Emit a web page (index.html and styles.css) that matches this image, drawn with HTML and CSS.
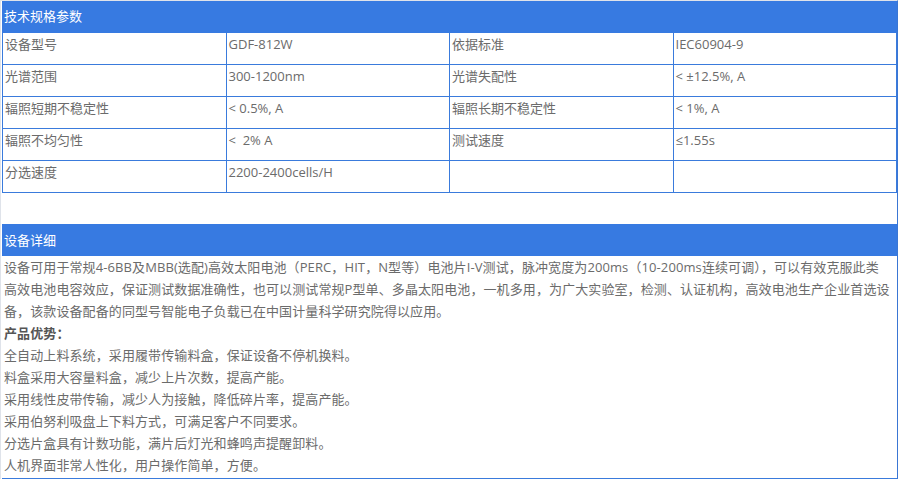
FILE: index.html
```html
<!DOCTYPE html>
<html lang="zh-CN">
<head>
<meta charset="utf-8">
<title>技术规格参数</title>
<link rel="stylesheet" href="styles.css">
</head>
<body>
<div class="wrap">
  <div class="bar">技术规格参数</div>
  <table class="spec">
    <colgroup><col class="c"><col class="c"><col class="c"><col class="c"></colgroup>
    <tr><td>设备型号</td><td>GDF-812W</td><td>依据标准</td><td>IEC60904-9</td></tr>
    <tr><td>光谱范围</td><td>300-1200nm</td><td>光谱失配性</td><td>&lt; ±12.5%, A</td></tr>
    <tr><td>辐照短期不稳定性</td><td>&lt; 0.5%, A</td><td>辐照长期不稳定性</td><td>&lt; 1%, A</td></tr>
    <tr><td>辐照不均匀性</td><td>&lt;&nbsp; 2% A</td><td>测试速度</td><td>≤1.55s</td></tr>
    <tr><td>分选速度</td><td>2200-2400cells/H</td><td></td><td></td></tr>
  </table>
  <div class="bar bar2">设备详细</div>
  <div class="detail">
    <p>设备可用于常规4-6BB及MBB(选配)高效太阳电池（PERC，HIT，N型等）电池片I-V测试，脉冲宽度为200ms（10-200ms连续可调），可以有效克服此类<br>高效电池电容效应，保证测试数据准确性，也可以测试常规P型单、多晶太阳电池，一机多用，为广大实验室，检测、认证机构，高效电池生产企业首选设<br>备，该款设备配备的同型号智能电子负载已在中国计量科学研究院得以应用。</p>
    <p class="strong">产品优势：</p>
    <p>全自动上料系统，采用履带传输料盒，保证设备不停机换料。</p>
    <p>料盒采用大容量料盒，减少上片次数，提高产能。</p>
    <p>采用线性皮带传输，减少人为接触，降低碎片率，提高产能。</p>
    <p>采用伯努利吸盘上下料方式，可满足客户不同要求。</p>
    <p>分选片盒具有计数功能，满片后灯光和蜂鸣声提醒卸料。</p>
    <p>人机界面非常人性化，用户操作简单，方便。</p>
  </div>
</div>
</body>
</html>
```

FILE: styles.css
```css
html, body {
  margin: 0;
  padding: 0;
  background: #ffffff;
}
body {
  font-family: "Open Sans", "Noto Sans CJK SC", sans-serif;
  font-size: 13px;
  color: #6b6b6b;
}
.wrap {
  width: 895px;
  border-top: 1px solid #dfe3ea;
  border-left: 1px solid #dfe3ea;
  border-right: 1px solid #3a76d4;
  padding-left: 1px;
}
.bar {
  height: 31px;
  line-height: 31px;
  background: #377ae1;
  color: #ffffff;
  padding: 0 2px;
  font-size: 13px;
}
.bar2 {
  height: 32px;
  line-height: 32px;
}
.spec {
  width: 100%;
  border-collapse: collapse;
  table-layout: fixed;
  margin-bottom: 31px;
}
.spec .c {
  width: 25%;
}
.spec tr {
  height: 32px;
}
.spec td {
  border: 1px solid #3a7bdc;
  padding: 1px 2px 0;
  line-height: 20px;
  vertical-align: top;
  white-space: nowrap;
  overflow: hidden;
}
.spec tr:first-child td {
  border-top-color: #377ae1;
}
.detail {
  padding: 0 2px 2px;
  border-bottom: 1px solid #3a7bdc;
  line-height: 22px;
  letter-spacing: 0.1px;
}
.detail p {
  margin: 0;
}
.detail .strong {
  font-weight: bold;
  color: #555555;
}
```
